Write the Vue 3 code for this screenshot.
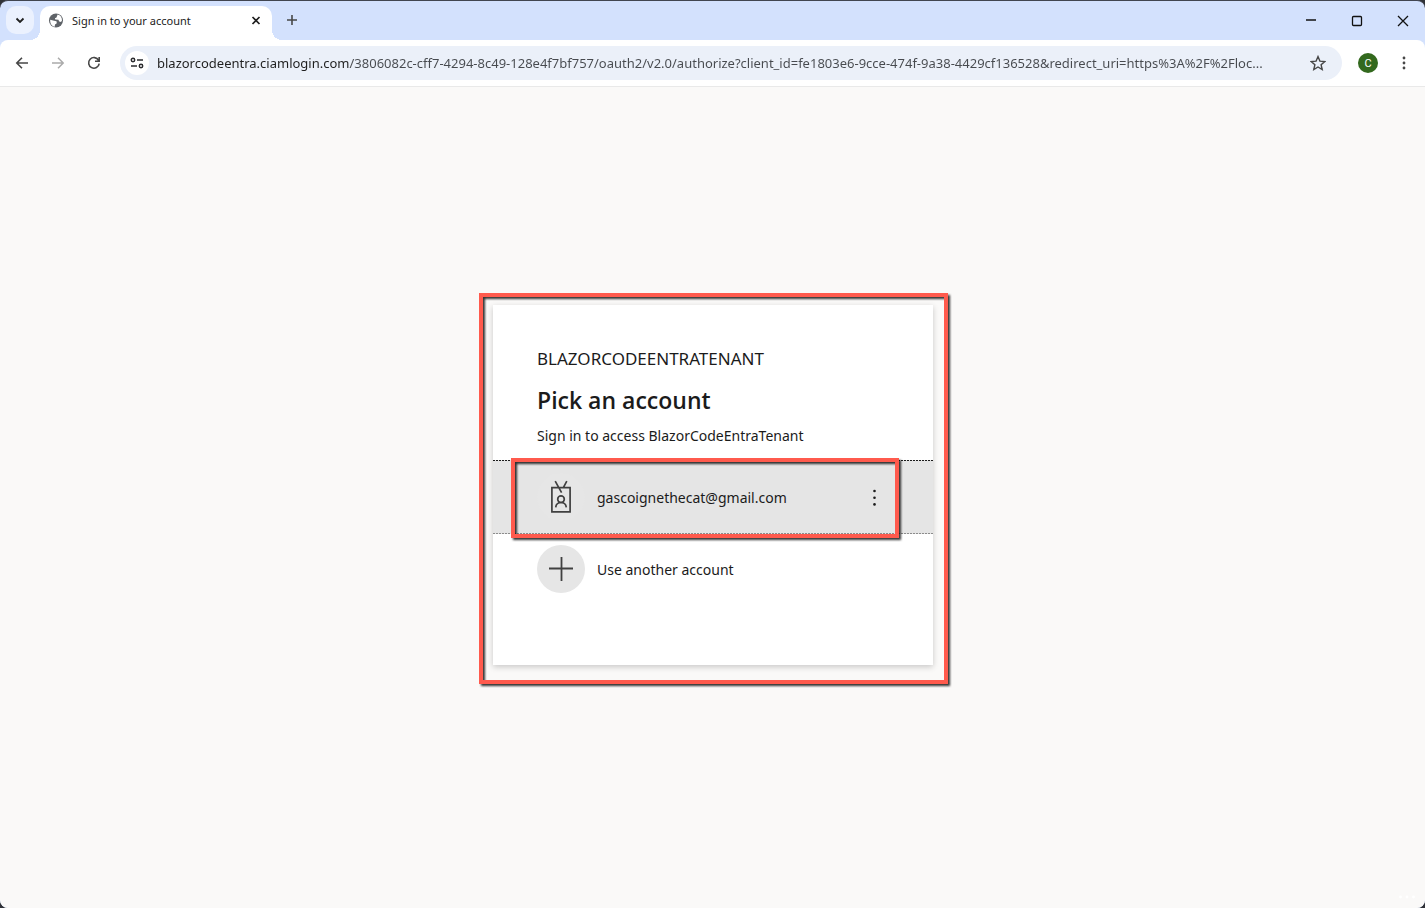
<script setup>
import { ref } from 'vue'

const address = ref('blazorcodeentra.ciamlogin.com/3806082c-cff7-4294-8c49-128e4f7bf757/oauth2/v2.0/authorize?client_id=fe1803e6-9cce-474f-9a38-4429cf136528&redirect_uri=https%3A%2F%2Floc...')
</script>

<template>
  <div class="window">
    <header class="tabstrip">
      <button class="tab-search" aria-label="Search tabs">
        <svg width="28" height="28" viewBox="0 0 28 28"><path d="M10.500 12.500 14 16l3.500-3.500" fill="none" stroke="#1f1f1f" stroke-width="1.800" /></svg>
      </button>
      <div class="tab">
        <svg width="16" height="16" viewBox="0 0 16 16">
          <circle cx="8" cy="7.500" r="7" fill="#5f6368" />
          <path d="M2.200 6.700 6 7.700 8.500 8.200 8.800 10.300 7 11.600 6.700 13.700C3.800 13.100 1.900 10.500 2.200 6.700ZM9.600 1.600C12.500 2.400 14 4.500 14 7.400L13 8.900 11.200 8.500 10.400 6.800 7.200 6.600 6.900 5.300 8.500 4.400Z" fill="#fff" />
        </svg>
        <span class="tab-title">Sign in to your account</span>
        <button class="icon-btn small" aria-label="Close tab">
          <svg width="16" height="16" viewBox="0 0 16 16"><path d="m4.500 4 7 7m0-7-7 7" stroke="#1f1f1f" stroke-width="1.700" /></svg>
        </button>
      </div>
      <button class="icon-btn new-tab" aria-label="New tab">
        <svg width="16" height="16" viewBox="0 0 16 16"><path d="M8 3v10M3 8h10" stroke="#474747" stroke-width="1.600" /></svg>
      </button>
      <div class="controls">
        <button aria-label="Minimize"><svg width="16" height="16" viewBox="0 0 16 16"><path d="M4 7h10" stroke="#111" stroke-width="1.500" /></svg></button>
        <button aria-label="Maximize"><svg width="16" height="16" viewBox="0 0 16 16"><rect x="4.500" y="3.500" width="9" height="9" rx="1" fill="none" stroke="#111" stroke-width="1.300" /></svg></button>
        <button aria-label="Close"><svg width="16" height="16" viewBox="0 0 16 16"><path d="m4 3 10 10M14 3 4 13" stroke="#111" stroke-width="1.300" /></svg></button>
      </div>
    </header>

    <nav class="toolbar">
      <button class="icon-btn" aria-label="Back">
        <svg width="16" height="16" viewBox="0 0 16 16"><path d="M14 8H3M8 2.800 2.800 8 8 13.200" fill="none" stroke="#474747" stroke-width="1.600" /></svg>
      </button>
      <button class="icon-btn" aria-label="Forward" disabled>
        <svg width="16" height="16" viewBox="0 0 16 16"><path d="M2 8h11M8 2.800 13.200 8 8 13.200" fill="none" stroke="#ababab" stroke-width="1.500" /></svg>
      </button>
      <button class="icon-btn" aria-label="Reload">
        <svg width="16" height="16" viewBox="0 0 16 16"><path d="M13.200 8.600A5.300 5.300 0 1 1 12.600 5.300M13.200 2v4.200H9" fill="none" stroke="#474747" stroke-width="1.600" /></svg>
      </button>
      <div class="omnibox">
        <button class="site-info" aria-label="View site information">
          <svg width="16" height="16" viewBox="0 0 16 16"><g fill="none" stroke="#2a2b2e" stroke-width="1.500"><circle cx="4" cy="5" r="1.700" /><path d="M8 5h6M2 11h6" /><circle cx="12" cy="11" r="1.700" /></g></svg>
        </button>
        <input v-model="address" class="address" type="text" aria-label="Address" spellcheck="false" />
        <button class="icon-btn" aria-label="Bookmark this page">
          <svg width="16" height="16" viewBox="0 0 16 16"><path d="m8 1.600 1.900 4.500 4.900.4-3.700 3.200 1.100 4.800L8 12l-4.200 2.500 1.100-4.800L1.200 6.500l4.900-.4Z" fill="none" stroke="#474747" stroke-width="1.400" /></svg>
        </button>
      </div>
      <button class="avatar" aria-label="Profile">C</button>
      <button class="icon-btn" aria-label="Browser menu">
        <svg width="16" height="16" viewBox="0 0 16 16" fill="#474747"><circle cx="8" cy="3" r="1.400" /><circle cx="8" cy="8" r="1.400" /><circle cx="8" cy="13" r="1.400" /></svg>
      </button>
    </nav>

    <main class="page">
      <section class="card">
        <div class="intro">
          <p class="tenant">BLAZORCODEENTRATENANT</p>
          <h1>Pick an account</h1>
          <p class="hint">Sign in to access BlazorCodeEntraTenant</p>
        </div>
        <div class="row selected">
          <button class="account">
            <svg width="48" height="48" viewBox="0 0 48 48">
              <circle cx="24" cy="24" r="24" fill="#e6e6e6" />
              <g fill="none" stroke="#404040" stroke-width="1.700">
                <path d="M14.900 14.700h18.200v24.200H14.900ZM18.200 8.200 24.600 19.600M29.800 8.200 26.200 14.800" />
                <circle cx="24" cy="26.200" r="3.300" />
                <path d="M18.700 34.300c.4-3.200 2.300-4.800 5.300-4.800s4.900 1.600 5.300 4.800" />
              </g>
            </svg>
            <span>gascoignethecat@gmail.com</span>
          </button>
          <button class="menu" aria-label="Open menu">
            <svg width="16" height="18" viewBox="0 0 16 18" fill="#1b1b1b"><circle cx="7.500" cy="3" r="1.300" /><circle cx="7.500" cy="9.700" r="1.300" /><circle cx="7.500" cy="16.400" r="1.300" /></svg>
          </button>
          <div class="frame row-frame" aria-hidden="true"></div>
        </div>
        <div class="row">
          <button class="account">
            <svg width="48" height="48" viewBox="0 0 48 48"><circle cx="24" cy="24" r="24" fill="#e6e6e6" /><path d="M24.500 12v24M12 23.500h24" stroke="#404040" stroke-width="1.800" /></svg>
            <span>Use another account</span>
          </button>
        </div>
        <div class="frame card-frame" aria-hidden="true"></div>
      </section>
      <button class="footer-more" aria-label="More options">
        <svg width="16" height="4" viewBox="0 0 16 4" fill="#fff"><circle cx="1.500" cy="2" r="1.400" /><circle cx="8" cy="2" r="1.400" /><circle cx="14.500" cy="2" r="1.400" /></svg>
      </button>
    </main>
  </div>
</template>

<style>
body {
  background: #303238;
}
</style>

<style scoped>
* {
  box-sizing: border-box;
}

.window {
  display: flex;
  flex-direction: column;
  min-height: 100vh;
  border-top: 1px solid #414550;
  border-radius: 8px;
  overflow: hidden;
  background: #d3e1fd;
  color: #1b1b1b;
  font-family: "Noto Sans", "Open Sans", sans-serif;
  font-size: 14px;
}

button {
  display: flex;
  align-items: center;
  justify-content: center;
  padding: 0;
  border: 0;
  background: none;
  color: inherit;
  font: inherit;
}

svg {
  display: block;
  flex: none;
}

p,
h1 {
  margin: 0;
}

.tabstrip {
  display: flex;
  height: 39px;
  padding: 5px 0 0 6px;
}

.tab-search {
  width: 28px;
  height: 28px;
  border-radius: 10px;
  background: #ebf1fe;
}

.tab {
  position: relative;
  display: flex;
  align-items: center;
  gap: 8px;
  width: 232px;
  height: 34px;
  margin-left: 6px;
  padding: 0 8px 4px;
  border-radius: 10px 10px 0 0;
  background: #fff;
}

.tab::before,
.tab::after {
  content: "";
  position: absolute;
  bottom: 0;
  width: 10px;
  height: 10px;
}

.tab::before {
  right: 100%;
  background: radial-gradient(circle at 0 0, transparent 10px, #fff 10px);
}

.tab::after {
  left: 100%;
  background: radial-gradient(circle at 100% 0, transparent 10px, #fff 10px);
}

.tab-title {
  flex: 1;
  font-size: 11px;
  line-height: 16px;
}

.icon-btn {
  width: 36px;
  height: 36px;
}

.icon-btn.small {
  width: 16px;
  height: 16px;
}

.new-tab {
  width: 28px;
  height: 28px;
  margin-left: 6px;
}

.controls {
  display: flex;
  height: 30px;
  margin-left: auto;
}

.controls button {
  width: 46px;
}

.toolbar {
  display: flex;
  align-items: center;
  height: 47px;
  padding: 0 3px 0 4px;
  border-bottom: 1px solid #e9e9e9;
  border-radius: 8px 8px 0 0;
  background: #fff;
}

.omnibox {
  display: flex;
  flex: 1;
  align-items: center;
  height: 34px;
  margin-left: 8px;
  padding: 0 6px 0 5px;
  border-radius: 17px;
  background: #ebf0f9;
}

.site-info {
  width: 24px;
  height: 24px;
  border-radius: 50%;
  background: #fff;
}

.address {
  flex: 1;
  min-width: 0;
  height: 24px;
  margin-left: 8px;
  padding: 0;
  border: 0;
  outline: 0;
  background: linear-gradient(90deg, #1f1f1f 193px, #474a4f 193px);
  background-clip: text;
  color: transparent;
  font: inherit;
  font-size: 13px;
}

.avatar {
  width: 20px;
  height: 20px;
  margin: 0 8px 0 16px;
  border-radius: 50%;
  background: #33691e;
  color: #fff;
  font-family: Roboto, sans-serif;
  font-size: 11px;
}

.page {
  position: relative;
  display: flex;
  flex: 1;
  align-items: center;
  justify-content: center;
  padding: 20px 20px 45px 21px;
  background: #faf9f8;
}

.card {
  position: relative;
  width: 440px;
  max-width: 100%;
  min-height: 360px;
  padding: 40px 0 60px;
  background: #fff;
  box-shadow: 0 2px 6px rgba(0, 0, 0, 0.2);
}

.intro {
  padding: 0 44px 12px;
}

.tenant {
  font-size: 17px;
  line-height: 28px;
}

h1 {
  margin-top: 12px;
  font-family: "Open Sans", "Noto Sans", sans-serif;
  font-size: 23px;
  font-weight: 600;
  line-height: 31px;
}

.hint {
  margin-top: 8px;
  line-height: 24px;
}

.row {
  position: relative;
  display: flex;
  align-items: center;
  height: 70px;
  padding: 0 44px;
}

.selected {
  height: 74px;
  background:
    repeating-linear-gradient(90deg, #1b1b1b 0 2px, #e5e5e5 2px 3px) top / 100% 1px no-repeat,
    repeating-linear-gradient(90deg, #8c8c8c 0 2px, #e5e5e5 2px 3px) bottom / 100% 1px no-repeat,
    #e5e5e5;
}

.account {
  flex: 1;
  justify-content: flex-start;
  gap: 12px;
}

.menu {
  width: 28px;
  height: 48px;
}

.frame {
  position: absolute;
  border: 4px solid #ff5a4d;
  filter: drop-shadow(2px 2px 1px rgba(0, 0, 0, 0.8));
  pointer-events: none;
}

.card-frame {
  inset: -12px -15px -19px -14px;
}

.row-frame {
  inset: -2px 34px -4px 18px;
}

.footer-more {
  position: absolute;
  right: 10px;
  bottom: 9px;
}
</style>
